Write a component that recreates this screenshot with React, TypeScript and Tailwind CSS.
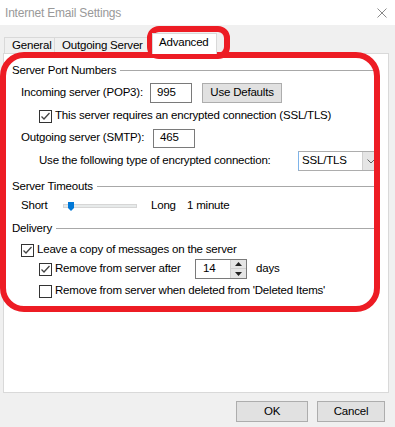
import React from "react";

const Check = ({ checked }: { checked: boolean }) => (
  <span className="w-[13px] h-[13px] border border-[#333333] bg-white flex items-center justify-center shrink-0">
    {checked && (
      <svg width="11" height="11" viewBox="0 0 11 11">
        <path d="M1.5 5.5 L4 8 L9.5 2" fill="none" stroke="#444444" strokeWidth="1.3" />
      </svg>
    )}
  </span>
);

const Header = ({ label, className }: { label: string; className: string }) => (
  <div className={className}>
    <span className="leading-[16px] whitespace-nowrap">{label}</span>
    <span className="flex-1 ml-[4px] h-px bg-[#a8a8a8]" />
  </div>
);

export default function App() {
  return (
    <div className="relative w-[395px] h-[427px] bg-[#f0f0f0] overflow-hidden text-[11.5px] tracking-[-0.2px] leading-none whitespace-nowrap text-black font-['Liberation_Sans',Arial,sans-serif]">
      {/* Title bar */}
      <div className="h-[25px] bg-white flex items-center justify-between pl-[5px] pr-[8px]">
        <span className="text-[#999999] text-[12px]">Internet Email Settings</span>
        <svg width="10" height="10" viewBox="0 0 10 10">
          <path d="M0.5 0.5 L9.5 9.5 M9.5 0.5 L0.5 9.5" stroke="#8a8a8a" strokeWidth="1" />
        </svg>
      </div>

      {/* Tabs */}
      <div className="h-[28px] flex items-end pl-[4px]">
        <div className="w-[51px] h-[16px] border-t border-l border-r border-[#d9d9d9] pl-[7px] flex items-center shrink-0">
          General
        </div>
        <div className="w-[98px] h-[16px] border-t border-r border-[#d9d9d9] pl-[7px] flex items-center overflow-hidden shrink-0">
          Outgoing Server
        </div>
        <div className="relative z-10 -ml-[1px] -mb-[1px] w-[65px] h-[21px] bg-white border-t border-l border-r border-[#d9d9d9] pl-[6px] pb-[2px] flex items-center shrink-0">
          Advanced
        </div>
      </div>

      {/* Panel */}
      <div className="ml-[3px] w-[386px] h-[340px] bg-white border border-[#d9d9d9] flex flex-col">
        <Header label="Server Port Numbers" className="flex items-center h-[16px] mt-[8px] pl-[8px] pr-[10px]" />

        <div className="flex items-center h-[20px] mt-[5px] pl-[17px]">
          <span className="w-[129px] shrink-0">Incoming server (POP3):</span>
          <div className="w-[42px] h-[20px] border border-[#7a7a7a] flex items-center pl-[6px] shrink-0">995</div>
          <div className="ml-[10px] w-[80px] h-[20px] bg-[#e1e1e1] border border-[#adadad] flex items-center justify-center shrink-0">
            Use Defaults
          </div>
        </div>

        <div className="flex items-center h-[16px] mt-[5px] pl-[35px]">
          <Check checked />
          <span className="ml-[3px]">This server requires an encrypted connection (SSL/TLS)</span>
        </div>

        <div className="flex items-center h-[20px] mt-[4px] pl-[17px]">
          <span className="w-[132px] shrink-0">Outgoing server (SMTP):</span>
          <div className="w-[42px] h-[19px] border border-[#7a7a7a] flex items-center pl-[6px] shrink-0">465</div>
        </div>

        <div className="flex items-center h-[20px] mt-[3px] pl-[35px]">
          <span className="w-[259px] shrink-0">Use the following type of encrypted connection:</span>
          <div className="w-[82px] h-[20px] border border-[#adadad] border-l-[#7eb4ea] flex items-center shrink-0">
            <span className="flex-1 pl-[3px]">SSL/TLS</span>
            <div className="w-[17px] h-[18px] bg-[#e5e5e5] border-l border-[#cfcfcf] flex items-center justify-center">
              <svg width="8" height="5" viewBox="0 0 8 5">
                <path d="M0.5 0.5 L4 4 L7.5 0.5" fill="none" stroke="#606060" strokeWidth="1" />
              </svg>
            </div>
          </div>
        </div>

        <Header label="Server Timeouts" className="flex items-center h-[16px] mt-[7px] pl-[8px] pr-[10px]" />

        <div className="flex items-center h-[16px] mt-[4px] pl-[17px]">
          <span className="w-[42px] shrink-0">Short</span>
          <div className="relative w-[74px] h-[4px] bg-[#e7eaea] border border-[#d6d6d6] shrink-0">
            <svg className="absolute left-[4px] -top-[3px]" width="6" height="9" viewBox="0 0 6 9">
              <path d="M0 0 H6 V6 L3 9 L0 6 Z" fill="#0078d7" />
            </svg>
          </div>
          <span className="ml-[14px] w-[36px] shrink-0">Long</span>
          <span>1 minute</span>
        </div>

        <Header label="Delivery" className="flex items-center h-[16px] mt-[6px] pl-[8px] pr-[10px]" />

        <div className="flex items-center h-[16px] mt-[6px] pl-[17px]">
          <Check checked />
          <span className="ml-[3px]">Leave a copy of messages on the server</span>
        </div>

        <div className="flex items-center h-[20px] mt-[1px] pl-[35px]">
          <Check checked />
          <span className="ml-[3px] w-[140px] shrink-0">Remove from server after</span>
          <div className="w-[52px] h-[20px] border border-[#7a7a7a] flex items-center shrink-0">
            <span className="flex-1 pl-[7px]">14</span>
            <div className="w-[16px] h-[18px] flex flex-col border-l border-[#cfcfcf]">
              <div className="h-[9px] bg-[#e5e5e5] border-b border-[#cfcfcf] flex items-center justify-center">
                <svg width="7" height="4" viewBox="0 0 7 4"><path d="M0 4 L3.5 0 L7 4 Z" fill="#222222" /></svg>
              </div>
              <div className="h-[9px] bg-[#e5e5e5] flex items-center justify-center">
                <svg width="7" height="4" viewBox="0 0 7 4"><path d="M0 0 L3.5 4 L7 0 Z" fill="#222222" /></svg>
              </div>
            </div>
          </div>
          <span className="ml-[9px]">days</span>
        </div>

        <div className="flex items-center h-[16px] mt-[4px] pl-[35px]">
          <Check checked={false} />
          <span className="ml-[3px]">Remove from server when deleted from 'Deleted Items'</span>
        </div>
      </div>

      {/* Buttons */}
      <div className="flex justify-end gap-[9px] pr-[10px] mt-[8px]">
        <div className="w-[72px] h-[21px] bg-[#e1e1e1] border border-[#adadad] flex items-center justify-center">OK</div>
        <div className="w-[68px] h-[21px] bg-[#e1e1e1] border border-[#adadad] flex items-center justify-center">Cancel</div>
      </div>

      {/* Red annotations */}
      <div className="absolute left-[0px] top-[52px] w-[380px] h-[260px] border-[6px] border-[#ed1c24] rounded-[24px] pointer-events-none" />
      <div className="absolute left-[147px] top-[26px] w-[83px] h-[33px] border-[6px] border-[#ed1c24] rounded-[12px] pointer-events-none" />
    </div>
  );
}
